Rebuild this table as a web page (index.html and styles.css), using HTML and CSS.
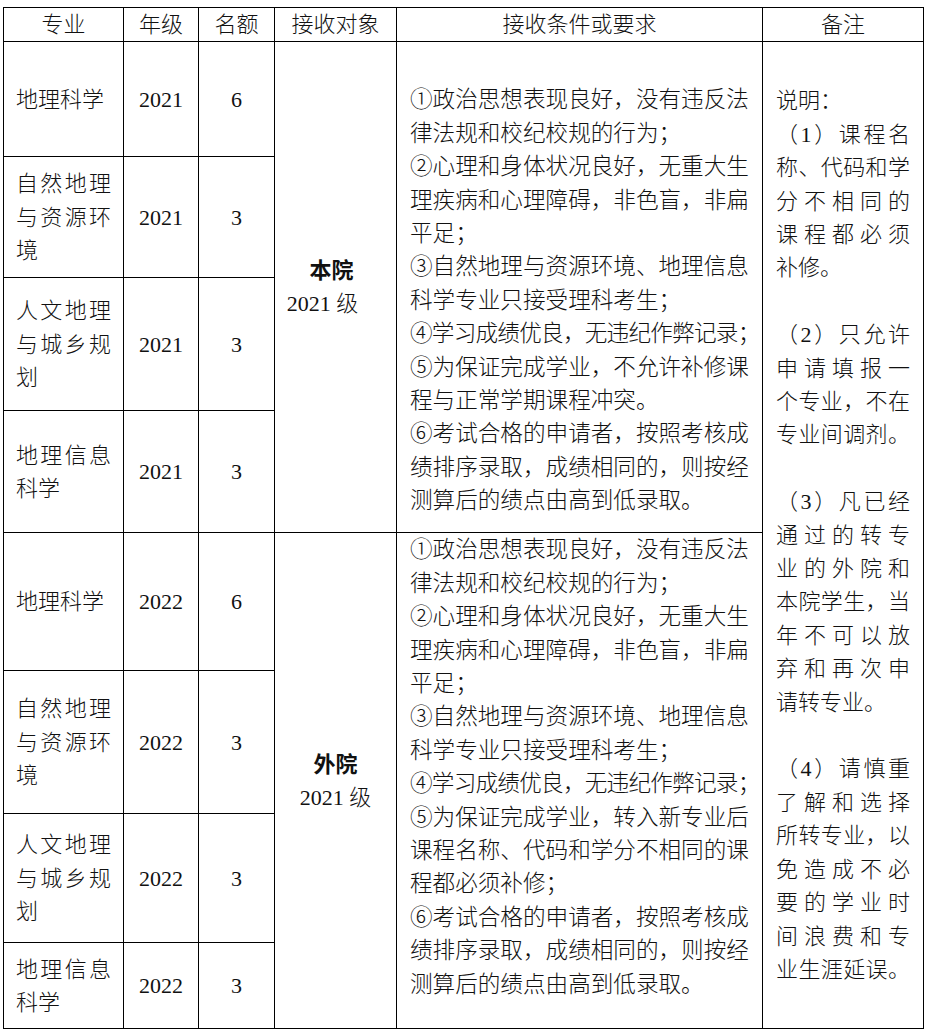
FILE: index.html
```html
<!DOCTYPE html>
<html lang="zh-CN">
<head>
<meta charset="utf-8">
<title>转专业接收计划</title>
<link rel="stylesheet" href="styles.css">
</head>
<body>
<table class="tbl">
  <colgroup>
    <col class="c1"><col class="c2"><col class="c3"><col class="c4"><col class="c5"><col class="c6">
  </colgroup>
  <thead>
    <tr class="rh">
      <th>专业</th><th>年级</th><th>名额</th><th>接收对象</th><th>接收条件或要求</th><th>备注</th>
    </tr>
  </thead>
  <tbody>
    <tr class="r1">
      <td class="maj">地理科学</td><td class="num">2021</td><td class="num">6</td>
      <td class="tgt tgt1" rowspan="4"><div class="tgt-name">本院</div><div class="yr1">2021 级</div></td>
      <td class="req req1" rowspan="4">
        <div>①政治思想表现良好，没有违反法</div>
        <div>律法规和校纪校规的行为；</div>
        <div>②心理和身体状况良好，无重大生</div>
        <div>理疾病和心理障碍，非色盲，非扁</div>
        <div>平足；</div>
        <div>③自然地理与资源环境、地理信息</div>
        <div>科学专业只接受理科考生；</div>
        <div class="tight">④学习成绩优良，无违纪作弊记录；</div>
        <div>⑤为保证完成学业，不允许补修课</div>
        <div>程与正常学期课程冲突。</div>
        <div>⑥考试合格的申请者，按照考核成</div>
        <div>绩排序录取，成绩相同的，则按经</div>
        <div>测算后的绩点由高到低录取。</div>
      </td>
      <td class="note" rowspan="8">
        <div class="para">
          <div>说明：</div>
          <div class="j">（1）课程名</div>
          <div class="j">称、代码和学</div>
          <div class="j">分不相同的</div>
          <div class="j">课程都必须</div>
          <div>补修。</div>
        </div>
        <div class="para">
          <div class="j">（2）只允许</div>
          <div class="j">申请填报一</div>
          <div class="j">个专业，不在</div>
          <div class="j">专业间调剂。</div>
        </div>
        <div class="para">
          <div class="j">（3）凡已经</div>
          <div class="j">通过的转专</div>
          <div class="j">业的外院和</div>
          <div class="j">本院学生，当</div>
          <div class="j">年不可以放</div>
          <div class="j">弃和再次申</div>
          <div>请转专业。</div>
        </div>
        <div class="para">
          <div class="j">（4）请慎重</div>
          <div class="j">了解和选择</div>
          <div class="j">所转专业，以</div>
          <div class="j">免造成不必</div>
          <div class="j">要的学业时</div>
          <div class="j">间浪费和专</div>
          <div class="j">业生涯延误。</div>
        </div>
      </td>
    </tr>
    <tr class="r2">
      <td class="maj">自然地理与资源环境</td><td class="num">2021</td><td class="num">3</td>
    </tr>
    <tr class="r3">
      <td class="maj">人文地理与城乡规划</td><td class="num">2021</td><td class="num">3</td>
    </tr>
    <tr class="r4">
      <td class="maj">地理信息科学</td><td class="num">2021</td><td class="num">3</td>
    </tr>
    <tr class="r5">
      <td class="maj">地理科学</td><td class="num">2022</td><td class="num">6</td>
      <td class="tgt" rowspan="4"><div class="tgt-name">外院</div><div>2021 级</div></td>
      <td class="req req2" rowspan="4">
        <div>①政治思想表现良好，没有违反法</div>
        <div>律法规和校纪校规的行为；</div>
        <div>②心理和身体状况良好，无重大生</div>
        <div>理疾病和心理障碍，非色盲，非扁</div>
        <div>平足；</div>
        <div>③自然地理与资源环境、地理信息</div>
        <div>科学专业只接受理科考生；</div>
        <div class="tight">④学习成绩优良，无违纪作弊记录；</div>
        <div>⑤为保证完成学业，转入新专业后</div>
        <div>课程名称、代码和学分不相同的课</div>
        <div>程都必须补修；</div>
        <div>⑥考试合格的申请者，按照考核成</div>
        <div>绩排序录取，成绩相同的，则按经</div>
        <div>测算后的绩点由高到低录取。</div>
      </td>
    </tr>
    <tr class="r6">
      <td class="maj">自然地理与资源环境</td><td class="num">2022</td><td class="num">3</td>
    </tr>
    <tr class="r7">
      <td class="maj">人文地理与城乡规划</td><td class="num">2022</td><td class="num">3</td>
    </tr>
    <tr class="r8">
      <td class="maj">地理信息科学</td><td class="num">2022</td><td class="num">3</td>
    </tr>
  </tbody>
</table>
</body>
</html>
```
FILE: styles.css
```css
html, body {
  margin: 0;
  padding: 0;
  background: #fff;
}

body {
  font-family: "Liberation Serif", "Noto Sans CJK SC", serif;
  font-size: 22px;
  color: #111;
}

.tbl {
  border-collapse: collapse;
  table-layout: fixed;
  width: 920px;
  margin: 7px 0 0 3px;
}

.c1 { width: 120px; }
.c2 { width: 75px; }
.c3 { width: 76px; }
.c4 { width: 122px; }
.c5 { width: 366px; }
.c6 { width: 161px; }

.tbl th,
.tbl td {
  border: 1px solid #000;
  padding: 0;
  font-weight: 300;
  line-height: 33.4px;
}

.tbl th {
  text-align: center;
  vertical-align: middle;
  font-weight: 300;
}

.rh { height: 34px; }
.r1 { height: 115px; }
.r2 { height: 121px; }
.r3 { height: 133px; }
.r4 { height: 122px; }
.r5 { height: 138px; }
.r6 { height: 143px; }
.r7 { height: 129px; }
.r8 { height: 86px; }

.maj {
  padding: 0 12px !important;
  text-align: justify;
  vertical-align: middle;
}

.num {
  text-align: center;
  vertical-align: middle;
}

.tgt {
  text-align: center;
  vertical-align: middle;
}

.tgt1 {
  padding-right: 8px !important;
}

.yr1 {
  padding-right: 18px;
}

.tgt-name {
  font-weight: 700;
}

.req {
  vertical-align: top;
  font-size: 22.6px;
  padding-left: 13px !important;
  white-space: nowrap;
}

.req1 { padding-top: 41px !important; }
.req2 { padding-top: 0 !important; }

.tight {
  letter-spacing: -0.75px;
}

.note {
  vertical-align: top;
  padding: 42px 13px 0 13px !important;
  white-space: nowrap;
}

.para + .para {
  margin-top: 33.4px;
}

.j {
  text-align: justify;
  text-align-last: justify;
}
```
